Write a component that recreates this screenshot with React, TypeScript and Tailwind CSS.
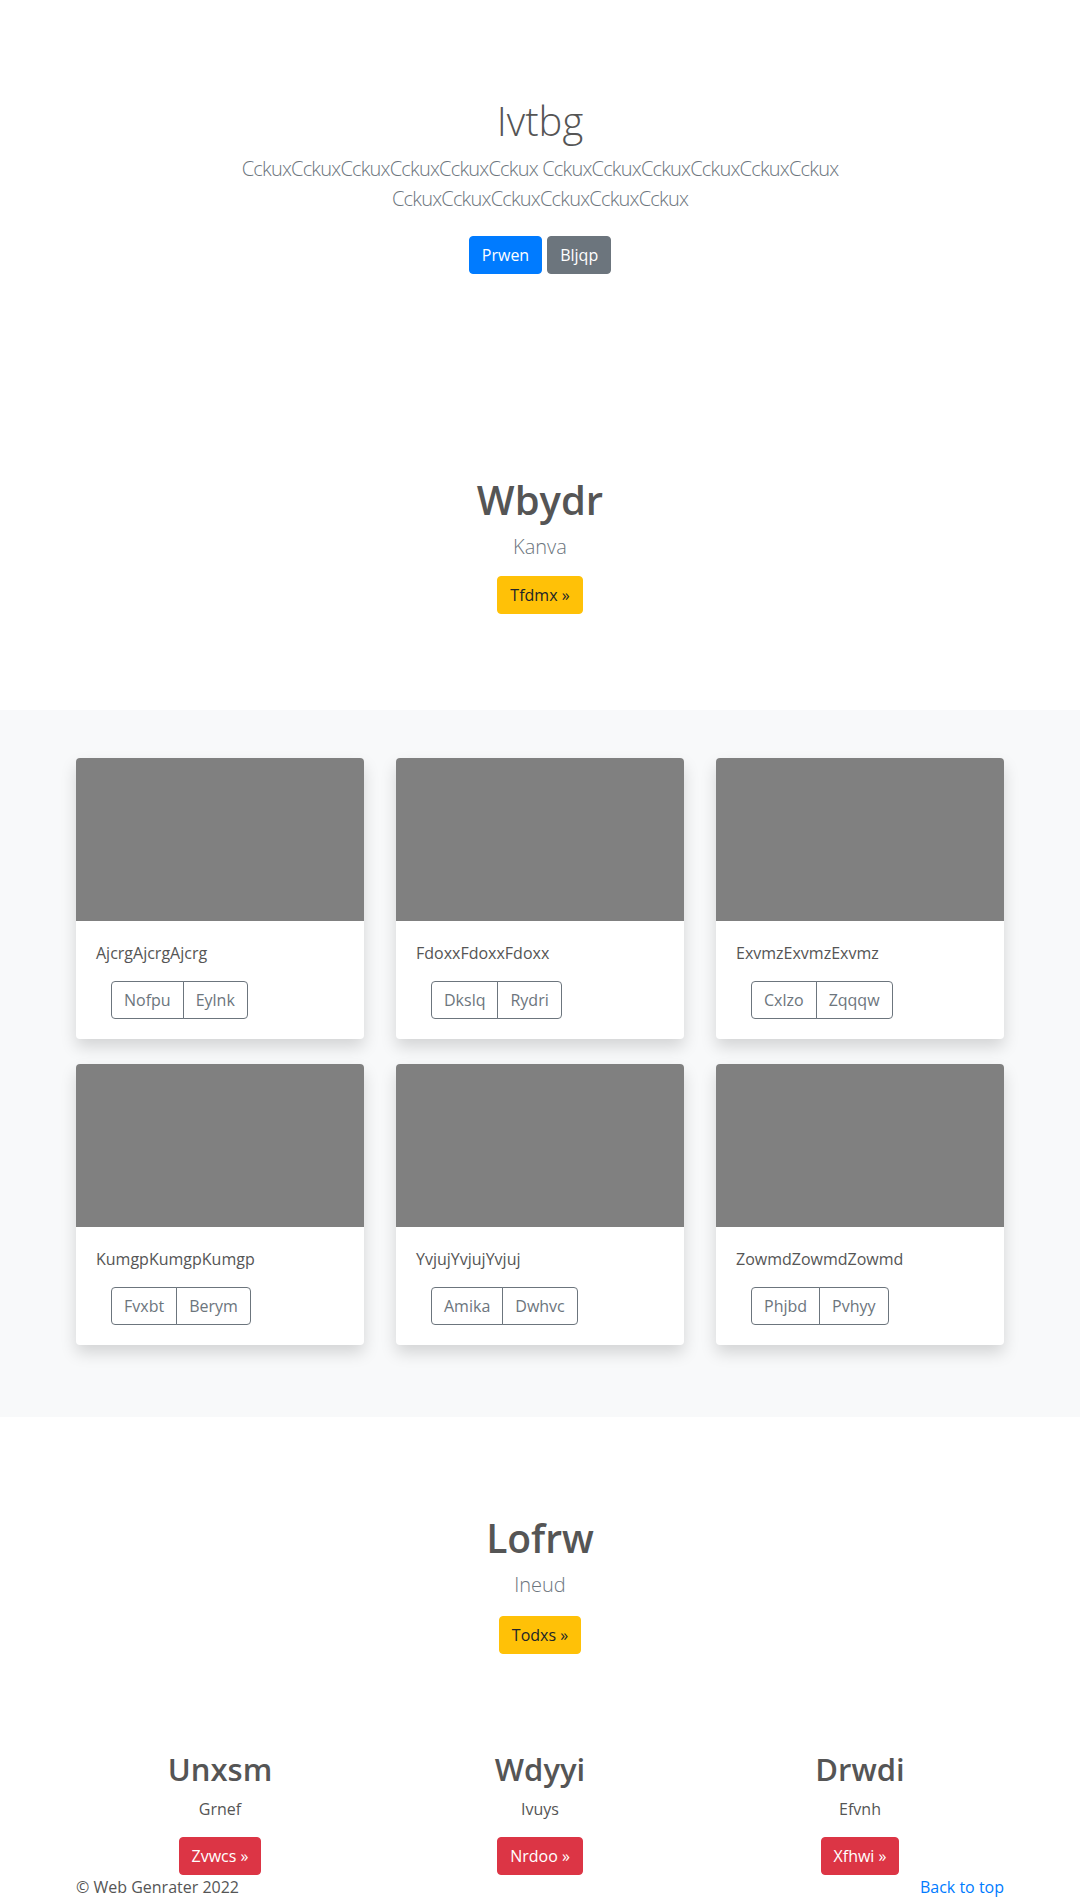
import React from 'react';

const cards = [
  { title: 'AjcrgAjcrgAjcrg', actions: ['Nofpu', 'Eylnk'] },
  { title: 'FdoxxFdoxxFdoxx', actions: ['Dkslq', 'Rydri'] },
  { title: 'ExvmzExvmzExvmz', actions: ['Cxlzo', 'Zqqqw'] },
  { title: 'KumgpKumgpKumgp', actions: ['Fvxbt', 'Berym'] },
  { title: 'YvjujYvjujYvjuj', actions: ['Amika', 'Dwhvc'] },
  { title: 'ZowmdZowmdZowmd', actions: ['Phjbd', 'Pvhyy'] },
];

const features = [
  { title: 'Unxsm', text: 'Grnef', cta: 'Zvwcs »' },
  { title: 'Wdyyi', text: 'Ivuys', cta: 'Nrdoo »' },
  { title: 'Drwdi', text: 'Efvnh', cta: 'Xfhwi »' },
];

const Card: React.FC<{ title: string; actions: string[] }> = ({ title, actions }) => (
  <div className="bg-white rounded-[4px] shadow-[0_8px_16px_rgba(0,0,0,0.15)] overflow-hidden">
    <div className="h-[163px] bg-[#808080]"></div>
    <div className="p-5">
      <p className="text-[16px] leading-6 text-[#555] mb-4">{title}</p>
      <div className="ml-[15px] flex">
        {actions.map((a, i) => (
          <span
            key={a}
            className={`px-3 py-1.5 text-[16px] leading-6 text-[#6c757d] border border-[#6c757d] ${
              i === 0 ? 'rounded-l-[4px]' : 'rounded-r-[4px] -ml-px'
            }`}
          >
            {a}
          </span>
        ))}
      </div>
    </div>
  </div>
);

const App: React.FC = () => {
  return (
    <div className="min-h-[1898px] bg-white font-['Open_Sans',sans-serif] text-[#555]">
      {/* Hero */}
      <section className="pt-[97px] text-center">
        <div className="max-w-[640px] mx-auto px-3">
          <h1 className="text-[40px] leading-[48px] font-light text-[#555] mb-[9px]">Ivtbg</h1>
          <p className="text-[20px] leading-[30px] font-light text-[#6c757d] mb-[22px] tracking-[-0.8px]">
            CckuxCckuxCckuxCckuxCckuxCckux CckuxCckuxCckuxCckuxCckuxCckux CckuxCckuxCckuxCckuxCckuxCckux
          </p>
          <div className="flex justify-center gap-[5px] mt-2">
            <span className="px-3 py-1.5 text-[16px] leading-6 text-white bg-[#007bff] border border-[#007bff] rounded-[4px]">
              Prwen
            </span>
            <span className="px-3 py-1.5 text-[16px] leading-6 text-white bg-[#6c757d] border border-[#6c757d] rounded-[4px]">
              Bljqp
            </span>
          </div>
        </div>
      </section>

      {/* Wbydr */}
      <section className="pt-[200px] pb-[96px] text-center">
        <h2 className="text-[40px] leading-[52px] font-semibold text-[#555] mb-1.5">Wbydr</h2>
        <p className="text-[20px] leading-[30px] font-light text-[#6c757d] mb-[14px]">Kanva</p>
        <span className="inline-block px-3 py-1.5 text-[16px] leading-6 text-[#212529] bg-[#ffc107] border border-[#ffc107] rounded-[4px]">
          Tfdmx »
        </span>
      </section>

      {/* Album */}
      <section className="bg-[#f8f9fa] pt-12 pb-[72px]">
        <div className="max-w-[960px] mx-auto px-4 grid grid-cols-3 gap-x-8 gap-y-[25px]">
          {cards.map((c) => (
            <Card key={c.title} title={c.title} actions={c.actions} />
          ))}
        </div>
      </section>

      {/* Lofrw */}
      <section className="pt-[95px] pb-[95px] text-center">
        <h2 className="text-[39px] leading-[52px] font-semibold text-[#555] mb-1.5">Lofrw</h2>
        <p className="text-[20px] leading-[30px] font-light text-[#6c757d] mb-4">Ineud</p>
        <span className="inline-block px-3 py-1.5 text-[16px] leading-6 text-[#212529] bg-[#ffc107] border border-[#ffc107] rounded-[4px]">
          Todxs »
        </span>
      </section>

      {/* Features */}
      <section className="max-w-[960px] mx-auto px-4 grid grid-cols-3 gap-x-8 text-center">
        {features.map((f) => (
          <div key={f.title}>
            <h3 className="text-[31px] leading-[40px] font-semibold text-[#555] mb-2">{f.title}</h3>
            <p className="text-[16px] leading-6 text-[#555] mb-4">{f.text}</p>
            <span className="inline-block px-3 py-1.5 text-[16px] leading-6 text-white bg-[#dc3545] border border-[#dc3545] rounded-[4px]">
              {f.cta}
            </span>
          </div>
        ))}
      </section>

      {/* Footer */}
      <footer className="max-w-[960px] mx-auto px-4 flex justify-between text-[16px] leading-6">
        <p className="text-[#555]">© Web Genrater 2022</p>
        <a href="#" className="text-[#007bff]">
          Back to top
        </a>
      </footer>
    </div>
  );
};

export default App;
